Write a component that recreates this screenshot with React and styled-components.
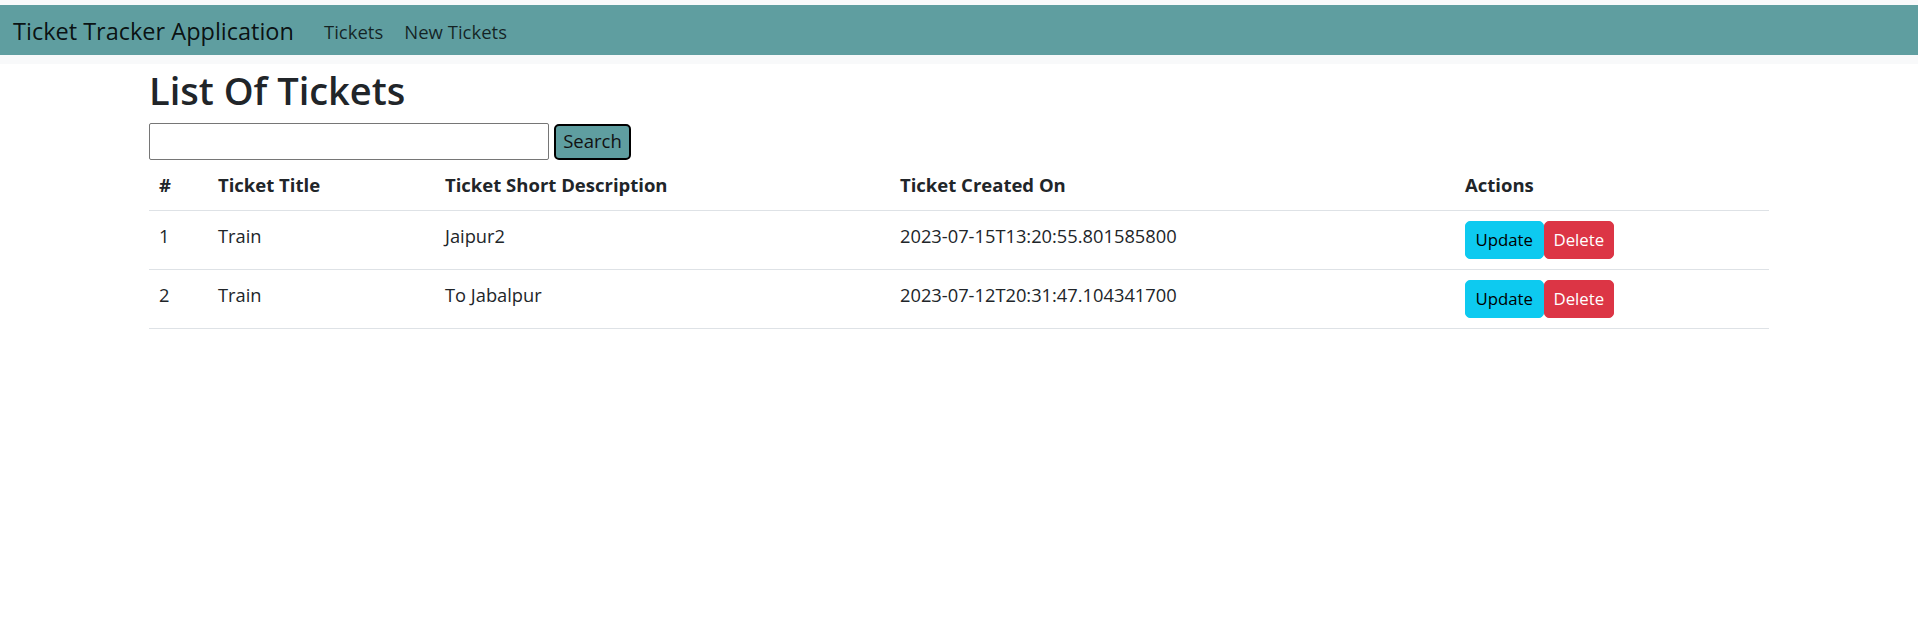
import React from "react";
import styled, { createGlobalStyle } from "styled-components";

const GlobalStyle = createGlobalStyle`
  html, body {
    margin: 0;
    padding: 0;
    background: #ffffff;
  }
  body {
    font-family: "Open Sans", "Noto Sans", "Liberation Sans", sans-serif;
    color: #212529;
  }
  * { box-sizing: border-box; }
`;

const Header = styled.header`
  background: #f8f9fa;
  padding: 5px 0 9px;
`;

const NavBar = styled.nav`
  height: 50px;
  background: #5f9ea0;
  display: flex;
  align-items: center;
  padding-left: 13px;
`;

const Brand = styled.a`
  width: 311px;
  font-size: 23.5px;
  line-height: 30px;
  color: rgba(0, 0, 0, 0.9);
  text-decoration: none;
  white-space: nowrap;
  margin-top: 2px;
`;

const NavLinks = styled.div`
  display: flex;
  gap: 21px;
  margin-top: 3px;
`;

const NavLink = styled.a`
  font-size: 18.5px;
  line-height: 30px;
  color: rgba(0, 0, 0, 0.78);
  text-decoration: none;
`;

const Container = styled.main`
  width: 1620px;
  margin: 0 auto;
`;

const Title = styled.h2`
  margin: 0 0 9px;
  padding-top: 2px;
  font-size: 38px;
  font-weight: 600;
  line-height: 48px;
  color: #212529;
`;

const SearchForm = styled.form`
  display: flex;
  align-items: center;
  gap: 5px;
  height: 37px;
`;

const SearchInput = styled.input`
  width: 400px;
  height: 37px;
  border: 1px solid #767676;
  border-radius: 2px;
  padding: 2px 4px;
  font-family: inherit;
  font-size: 16px;
  background: #fff;
`;

const SearchButton = styled.button`
  width: 77px;
  height: 36px;
  background: #5f9ea0;
  border: 2px solid #000;
  border-radius: 5px;
  font-family: inherit;
  font-size: 18.5px;
  line-height: 1;
  color: #111;
  padding: 0;
`;

const Table = styled.table`
  width: 1620px;
  border-collapse: collapse;
  table-layout: fixed;
`;

const HeadCell = styled.th`
  padding: 10px;
  text-align: left;
  vertical-align: top;
  font-size: 18.5px;
  line-height: 30px;
  font-weight: 700;
  color: #212529;
  border-bottom: 1px solid #dee2e6;
`;

const Cell = styled.td`
  padding: 10px;
  text-align: left;
  vertical-align: top;
  font-size: 18.3px;
  line-height: 30px;
  color: #212529;
  border-bottom: 1px solid #dee2e6;
  white-space: nowrap;
`;

const Actions = styled.div`
  display: flex;
  height: 38px;
`;

const ActionButton = styled.button`
  height: 38px;
  padding: 0 ${(p) => (p.$variant === "danger" ? 9 : 9.5)}px;
  border-radius: 5px;
  border: 1px solid ${(p) => (p.$variant === "danger" ? "#dc3545" : "#0dcaf0")};
  background: ${(p) => (p.$variant === "danger" ? "#dc3545" : "#0dcaf0")};
  color: ${(p) => (p.$variant === "danger" ? "#ffffff" : "#000000")};
  font-family: inherit;
  font-size: 16.8px;
  line-height: 1;
`;

const columns = [
  { label: "#", width: 59 },
  { label: "Ticket Title", width: 227 },
  { label: "Ticket Short Description", width: 455 },
  { label: "Ticket Created On", width: 565 },
  { label: "Actions", width: 314 },
];

const tickets = [
  { id: 1, title: "Train", desc: "Jaipur2", created: "2023-07-15T13:20:55.801585800" },
  { id: 2, title: "Train", desc: "To Jabalpur", created: "2023-07-12T20:31:47.104341700" },
];

export default function App() {
  return (
    <>
      <GlobalStyle />
      <Header>
        <NavBar>
          <Brand href="#">Ticket Tracker Application</Brand>
          <NavLinks>
            <NavLink href="#">Tickets</NavLink>
            <NavLink href="#">New Tickets</NavLink>
          </NavLinks>
        </NavBar>
      </Header>
      <Container>
        <Title>List Of Tickets</Title>
        <SearchForm onSubmit={(e) => e.preventDefault()}>
          <SearchInput type="text" />
          <SearchButton type="submit">Search</SearchButton>
        </SearchForm>
        <Table>
          <colgroup>
            {columns.map((c) => (
              <col key={c.label} style={{ width: c.width }} />
            ))}
          </colgroup>
          <thead>
            <tr>
              {columns.map((c) => (
                <HeadCell key={c.label}>{c.label}</HeadCell>
              ))}
            </tr>
          </thead>
          <tbody>
            {tickets.map((t) => (
              <tr key={t.id}>
                <Cell>{t.id}</Cell>
                <Cell>{t.title}</Cell>
                <Cell>{t.desc}</Cell>
                <Cell>{t.created}</Cell>
                <Cell>
                  <Actions>
                    <ActionButton $variant="info">Update</ActionButton>
                    <ActionButton $variant="danger">Delete</ActionButton>
                  </Actions>
                </Cell>
              </tr>
            ))}
          </tbody>
        </Table>
      </Container>
    </>
  );
}
